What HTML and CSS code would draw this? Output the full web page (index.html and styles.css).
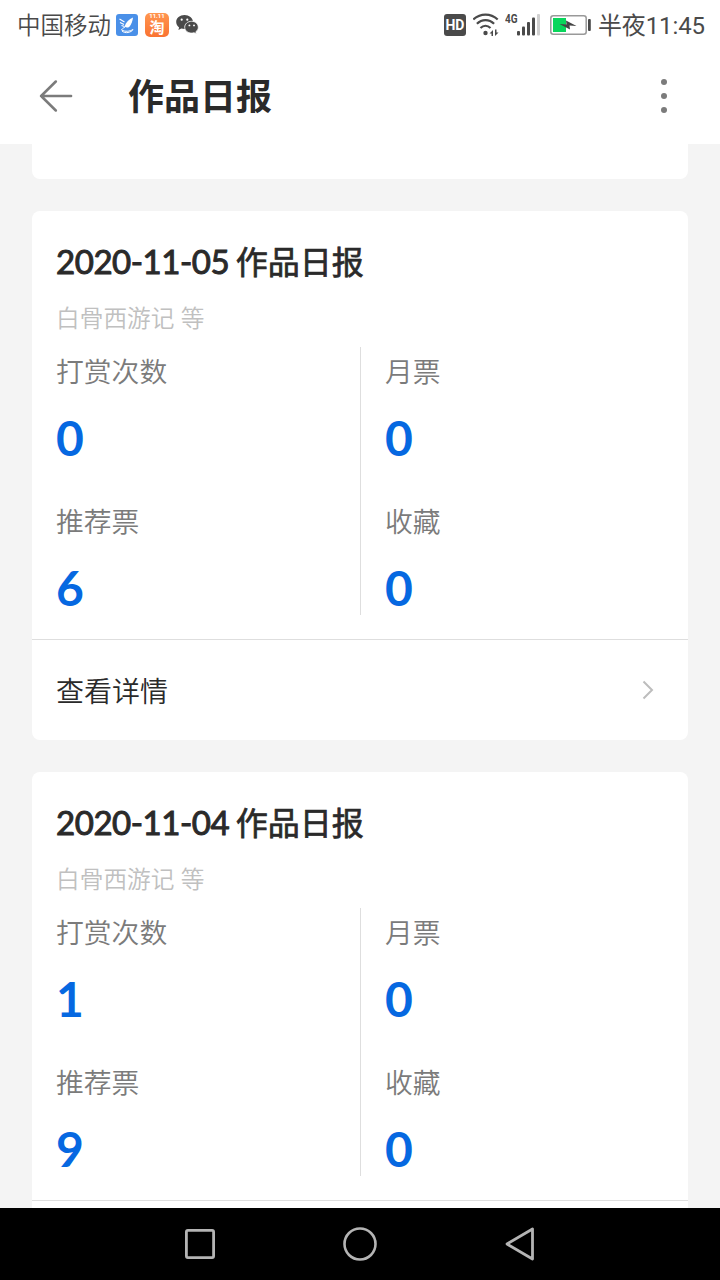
FILE: index.html
```html
<!DOCTYPE html>
<html lang="zh-CN">
<head>
  <meta charset="UTF-8" />
  <meta name="viewport" content="width=device-width, initial-scale=1.0" />
  <title>作品日报</title>
  <link rel="stylesheet" href="styles.css">
</head>
<body>
  <div class="statusbar">
    <span class="carrier">中国移动</span>
    <svg class="app-blue" width="22" height="22" viewBox="0 0 22 22">
      <rect width="22" height="22" rx="3" fill="#4a90e8"/>
      <path d="M3.500 5l5 3M4 8.500l4 2M5.500 11.500l3 1" stroke="#fff" stroke-width="1.100" fill="none"/>
      <path d="M17 3.500c-4 1.500-7 5-8.500 9 2 1.500 4 1.500 5.500-.5 1.500-2 2.500-5 3-8.500z" fill="#fff"/>
      <path d="M9 13c-2 1-3 2-3.500 3 4 2 8 1.500 11.500-.5-1.500 3-8 4.500-11 1.500" fill="none" stroke="#fff" stroke-width="1"/>
    </svg>
    <div class="app-tao"><i>11.11</i><b>淘</b></div>
    <svg class="wechat" width="23" height="20" viewBox="0 0 23 20">
      <path d="M8.500 0C3.800 0 .2 3 .2 7c0 2.200 1.100 4 2.900 5.400L2.400 15l2.900-1.500c1 .3 2 .5 3.200.5C13 14 17 11 17 7S13 0 8.500 0z" fill="#4a4a4a"/>
      <path d="M15.600 6.300c-3.900 0-6.900 2.600-6.900 5.900s3 5.900 6.900 5.900c.9 0 1.700-.1 2.500-.4l2.300 1.400-.6-2.300c1.500-1 2.500-2.700 2.500-4.600 0-3.300-2.900-5.900-6.700-5.900z" fill="#4a4a4a" stroke="#fff" stroke-width=".8"/>
      <circle cx="5.700" cy="4.700" r="1.100" fill="#fff"/>
      <circle cx="11.300" cy="4.700" r="1.100" fill="#fff"/>
      <circle cx="13.400" cy="10.400" r=".95" fill="#fff"/>
      <circle cx="18" cy="10.400" r=".95" fill="#fff"/>
    </svg>
    <span class="spacer"></span>
    <span class="hd">HD</span>
    <svg class="wifi" width="27" height="24" viewBox="0 0 27 24">
      <g fill="none" stroke="#4a4a4a" stroke-width="2.200">
        <path d="M.3 6.500c7-6.500 17.400-6.500 24.400 0"/>
        <path d="M3.900 10.800c5-5 12.200-5 17.200 0"/>
        <path d="M7.500 15c3-3 7-3 10 0"/>
      </g>
      <circle cx="12.500" cy="20" r="2.200" fill="#4a4a4a"/>
      <path d="M16.500 20.500l3.500-3.500v6h-1.500v-2.500zM25.500 19.500L22 23v-6.500h1.500v3z" fill="#4a4a4a"/>
    </svg>
    <span class="net">4G</span>
    <svg class="signal" width="24" height="22" viewBox="0 0 24 22">
      <g fill="#4a4a4a">
        <rect x="0" y="17" width="3" height="4.500" rx="1"/>
        <rect x="5" y="12.500" width="3" height="9" rx="1"/>
        <rect x="10" y="8" width="3" height="13.500" rx="1"/>
        <rect x="15" y="3.500" width="3" height="18" rx="1"/>
      </g>
      <rect x="20" y="0" width="3" height="21.500" rx="1" fill="#d0d0d0"/>
    </svg>
    <svg class="battery" width="42" height="20" viewBox="0 0 42 20">
      <rect x=".8" y=".8" width="35.400" height="18.400" rx="2.500" fill="#fff" stroke="#999" stroke-width="1.500"/>
      <rect x="3" y="3" width="13" height="14" fill="#08d65b"/>
      <path d="M9.500 9l7 .5-.5-4 10.500 5.500-7-.5.500 4z" fill="#444"/>
      <rect x="38" y="4" width="2.800" height="12" rx="1" fill="#4a4a4a"/>
    </svg>
    <span class="clock">半夜11:45</span>
  </div>

  <header class="topbar">
    <svg class="back" width="34" height="32" viewBox="0 0 34 32">
      <path d="M16.800 1.500L2.100 16l14.700 14.500M2.100 16h30" fill="none" stroke="#7b7b7b" stroke-width="2.500" stroke-linecap="round" stroke-linejoin="round"/>
    </svg>
    <h1>作品日报</h1>
    <div class="more"><span></span><span></span><span></span></div>
  </header>

  <main class="feed">
    <section class="card card-end"></section>

    <section class="card">
      <h2>2020-11-05 <span>作品日报</span></h2>
      <p class="book">白骨西游记 等</p>
      <div class="stats">
        <div class="col">
          <div class="stat"><div class="label">打赏次数</div><div class="num">0</div></div>
          <div class="stat"><div class="label">推荐票</div><div class="num">6</div></div>
        </div>
        <div class="col">
          <div class="stat"><div class="label">月票</div><div class="num">0</div></div>
          <div class="stat"><div class="label">收藏</div><div class="num">0</div></div>
        </div>
      </div>
      <div class="detail">
        <span>查看详情</span>
        <svg width="12" height="20" viewBox="0 0 12 20"><path d="M1.500 1.500L10 10l-8.500 8.500" fill="none" stroke="#bdbdbd" stroke-width="2"/></svg>
      </div>
    </section>

    <section class="card">
      <h2>2020-11-04 <span>作品日报</span></h2>
      <p class="book">白骨西游记 等</p>
      <div class="stats">
        <div class="col">
          <div class="stat"><div class="label">打赏次数</div><div class="num">1</div></div>
          <div class="stat"><div class="label">推荐票</div><div class="num">9</div></div>
        </div>
        <div class="col">
          <div class="stat"><div class="label">月票</div><div class="num">0</div></div>
          <div class="stat"><div class="label">收藏</div><div class="num">0</div></div>
        </div>
      </div>
      <div class="detail"></div>
    </section>
  </main>

  <nav class="navbar">
    <svg width="32" height="32" viewBox="0 0 32 32"><rect x="2.400" y="2.400" width="27.200" height="27.200" rx="1.500" fill="none" stroke="#b4b4b4" stroke-width="2.800"/></svg>
    <svg width="34" height="34" viewBox="0 0 34 34"><circle cx="17" cy="17" r="15.500" fill="none" stroke="#b4b4b4" stroke-width="2.600"/></svg>
    <svg width="32" height="36" viewBox="0 0 32 36"><path d="M28.500 3v30L3 18z" fill="none" stroke="#b4b4b4" stroke-width="2.800" stroke-linejoin="round"/></svg>
  </nav>
</body>
</html>
```

FILE: styles.css
```css
* { box-sizing: border-box; }
body {
  margin: 0;
  height: 1280px;
  display: flex;
  flex-direction: column;
  overflow: hidden;
  background: #f4f4f4;
  color: #2a2a2a;
  font-family: Lato, "Noto Sans CJK SC", sans-serif;
}
h1, h2, p { margin: 0; }
svg { display: block; flex: none; }

/* status bar */
.statusbar {
  display: flex;
  align-items: center;
  height: 50px;
  flex: none;
  padding: 0 15px 0 17px;
  background: #fff;
  color: #4a4a4a;
  font-family: Roboto, "Noto Sans CJK SC", sans-serif;
  white-space: nowrap;
}
.carrier {
  width: 99px;
  padding-bottom: 2px;
  font-size: 23.5px;
  font-weight: 350;
}
.app-tao {
  width: 24px;
  height: 24px;
  margin: 0 7px;
  border-radius: 5px;
  background: linear-gradient(#ff9650, #fa7332);
  color: #fff;
  text-align: center;
}
.app-tao i {
  display: block;
  font: bold 6px/6px Roboto, sans-serif;
}
.app-tao b {
  display: block;
  font-size: 15px;
  line-height: 19px;
}
.spacer { flex: 1; }
.hd {
  width: 22px;
  height: 22px;
  border-radius: 3px;
  background: #4a4a4a;
  color: #fff;
  font-size: 14px;
  font-weight: bold;
  line-height: 22px;
  text-align: center;
}
.wifi { margin-left: 7px; }
.net {
  width: 13px;
  margin: -14px 0 0 5px;
  font: bold 13.5px/14px Roboto, sans-serif;
  transform: scaleX(.74);
  transform-origin: left;
}
.signal { margin-left: -1px; }
.battery { margin-left: 9px; }
.clock {
  margin-left: 6px;
  padding-bottom: 4px;
  font-size: 24px;
  letter-spacing: -.1px;
}

/* title bar */
.topbar {
  display: flex;
  align-items: center;
  height: 94px;
  flex: none;
  padding: 0 53px 2px 39px;
  background: #fff;
}
.topbar h1 {
  flex: 1;
  margin-left: 55px;
  font-size: 36px;
  line-height: 52px;
  font-weight: bold;
}
.more { display: flex; flex-direction: column; gap: 8px; }
.more span {
  width: 6px;
  height: 6px;
  border-radius: 50%;
  background: #7b7b7b;
}

/* cards */
.feed {
  flex: 1;
  min-height: 0;
  overflow: hidden;
  padding: 0 32px;
}
.card {
  margin-bottom: 32px;
  padding-top: 24px;
  border-radius: 8px;
  background: #fff;
}
.card-end {
  height: 35px;
  border-radius: 0 0 8px 8px;
}
.card h2 {
  height: 54px;
  padding: 0 24px;
  font-size: 33px;
  line-height: 53px;
  font-weight: 400;
  letter-spacing: -.45px;
  word-spacing: -1.5px;
  -webkit-text-stroke: 1px #2a2a2a;
}
.card h2 span {
  font-size: 32px;
  letter-spacing: 0;
  -webkit-text-stroke-width: .7px;
}
.book {
  margin: 11px 24px;
  font-size: 23.7px;
  font-weight: 350;
  line-height: 36px;
  color: #c0c0c0;
}
.stats {
  display: flex;
  padding: 0 24px 24px;
}
.col {
  flex: none;
  width: 305px;
  display: flex;
  flex-direction: column;
  gap: 32px;
}
.col:first-child { border-right: 1px solid #dedede; }
.col + .col {
  width: 303px;
  padding-left: 24px;
}
.label {
  font-size: 27.8px;
  font-weight: 350;
  line-height: 50px;
  color: #7b7b7b;
}
.num {
  margin-top: 14px;
  font-size: 48px;
  line-height: 54px;
  font-weight: bold;
  color: #0668e1;
}
.detail {
  display: flex;
  align-items: center;
  justify-content: space-between;
  height: 101px;
  padding: 0 34px 0 24px;
  border-top: 1px solid #dedede;
  font-size: 28px;
  font-weight: 350;
}

/* system buttons */
.navbar {
  display: flex;
  align-items: center;
  justify-content: center;
  gap: 127px;
  height: 72px;
  flex: none;
  background: #000;
}
```
